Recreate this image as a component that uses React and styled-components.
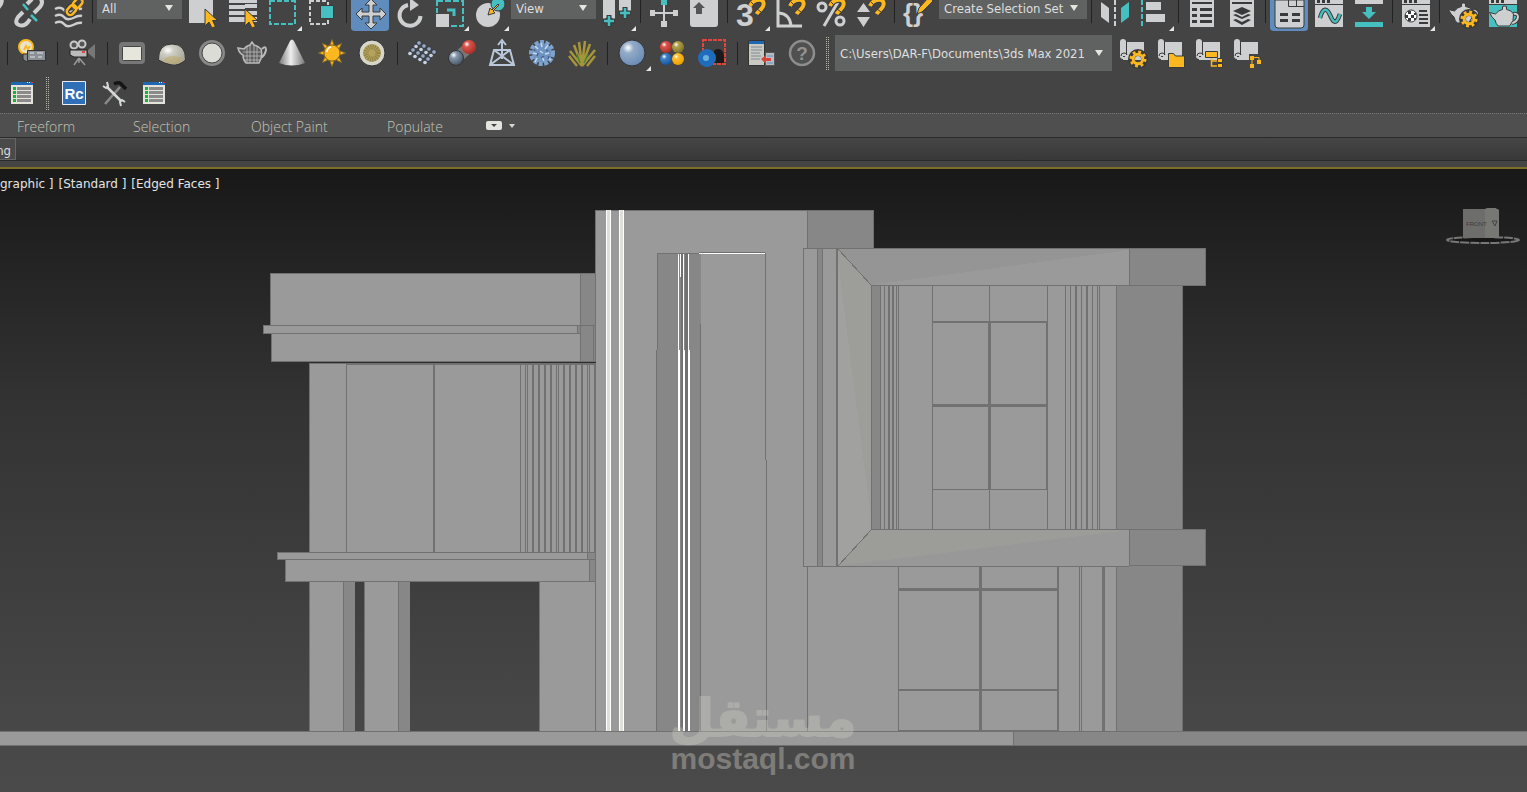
import styled, { createGlobalStyle } from "styled-components";

const LIGHT = "#cdcfd0";
const TEAL = "#45bfc0";
const GOLD = "#fcb81e";
const DARK = "#3a3a3a";
const FACE = "#9a9a9a";
const SIDE = "#878787";
const EDGE = "#717171";

const GlobalStyle = createGlobalStyle`
  * {
    box-sizing: border-box;
  }
  body {
    margin: 0;
    background: #444;
    color: #dfdfdf;
    font-family: "DejaVu Sans Condensed", "DejaVu Sans", sans-serif;
    font-size: 13px;
  }
  button, select {
    font: inherit;
    color: inherit;
  }
`;

const Page = styled.div`
  display: flex;
  flex-direction: column;
  min-height: 100vh;
  overflow: hidden;
`;

const Toolbar = styled.div`
  display: flex;
  align-items: ${(props) => (props.$cut ? "flex-start" : "center")};
  height: ${(props) => (props.$cut ? 33 : 40)}px;
  padding-left: ${(props) => (props.$cut ? 0 : 2)}px;
  background: #444;
`;

const IconButton = styled.button`
  display: flex;
  flex: none;
  justify-content: center;
  align-items: flex-start;
  width: ${(props) => props.$width || 40}px;
  height: ${(props) => props.$height || 40}px;
  padding: 0;
  border: solid transparent;
  border-width: 0 1px 2px;
  border-radius: 0 0 5px 5px;
  background: ${(props) => (props.$active ? "#5f8bbd" : "transparent")};
  background-clip: padding-box;

  svg {
    flex: none;
    display: block;
  }
`;

const Separator = styled.span`
  flex: none;
  width: ${(props) => (props.$wide ? 10 : 7)}px;
  height: 23px;
  background: linear-gradient(#222, #222) center / 1px 100% no-repeat;
`;

const Grip = styled.span`
  flex: none;
  width: 3px;
  height: 33px;
  margin: 0 5px 0 4px;
  border: dotted #b5b5a8;
  border-width: 0 1px;
`;

const Picker = styled.label`
  display: grid;
  flex: none;
  width: ${(props) => props.$width}px;
  height: ${(props) => props.$height}px;
  margin: 0 1px;
  background: #5f6261;

  select,
  svg {
    grid-area: 1 / 1;
  }
  select {
    appearance: none;
    width: 100%;
    height: 100%;
    padding: ${(props) => (props.$height < 30 ? "0 20px 3px 5px" : "0 16px 0 5px")};
    border: 0;
    background: none;
    outline: none;
  }
  svg {
    place-self: ${(props) => (props.$height < 30 ? "start" : "center")} end;
    margin: ${(props) => (props.$height < 30 ? "5px 9px 0 0" : "0 9px 0 0")};
    pointer-events: none;
  }
`;

const Ribbon = styled.nav`
  display: grid;
  grid-template-columns: 116px 118px 136px 98px 32px;
  align-items: center;
  height: 25px;
  padding-left: 17px;
  border-top: 1px dotted #777;
  border-bottom: 1px solid #2b2b2b;
  background: #4f4f4f;
`;

const Tab = styled.button`
  padding: 2px 0 0;
  border: 0;
  background: none;
  color: #c4c4b6;
  font-family: "Open Sans", "Noto Sans", sans-serif;
  font-size: 14px;
  font-weight: 300;
  line-height: 20px;
  text-align: left;
`;

const RibbonToggle = styled.button`
  display: flex;
  padding: 0;
  border: 0;
  background: none;
`;

const PanelBar = styled.div`
  display: flex;
  height: 23px;
  border-bottom: 1px solid #2b2b2b;
  background: linear-gradient(#464646, #383838);
`;

const PanelButton = styled.button`
  display: flex;
  justify-content: flex-end;
  align-items: center;
  width: 16px;
  height: 22px;
  padding: 2px 4px 0 0;
  overflow: hidden;
  border: 1px solid #666;
  border-left: 0;
  background: #4a4a4a;
`;

const Viewport = styled.main`
  position: relative;
  flex: 1;
  display: flex;
  margin-top: 6px;
  border-top: 2px solid #7f6d25;
  background: linear-gradient(#181818, #202020 10%, #333 38%, #3e3e3e 66%, #474747 88%, #4a4a4a);
`;

const ViewLabels = styled.div`
  position: absolute;
  top: 6px;
  left: 0;
  display: flex;
  gap: 5px;

  button {
    padding: 0;
    border: 0;
    background: none;
    color: #e4e4e4;
    font-family: "DejaVu Sans", sans-serif;
    font-size: 12px;
    line-height: 18px;
  }
`;

const Scene = styled.svg`
  display: block;
  width: 100%;
  min-height: 623px;
  flex: 1;
`;

const cursor = (
  <path d="M22 9v17l4-4 3 6 3.500-1.500-3-6h5z" fill={GOLD} stroke={DARK} />
);
const flyout = <path d="M39 26v5h-5z" fill="#e6e6e6" />;
const magnet = (
  <g fill="none">
    <path d="M19 6C22-1 34-3 32.500 5C32 9 28 10 25.500 14" stroke={DARK} strokeWidth="6" />
    <path d="M19 6C22-1 34-3 32.500 5C32 9 28 10 25.500 14" stroke={GOLD} strokeWidth="4" />
    <path d="M20 2l3 3M26 9l4 3" stroke={DARK} />
  </g>
);
const gear = (
  <g>
    <circle r="6.500" fill="none" stroke={DARK} strokeWidth="7" />
    <circle r="7" fill="none" stroke={GOLD} strokeWidth="3" strokeDasharray="2.750 2.750" />
    <circle r="4.800" fill="none" stroke={GOLD} strokeWidth="3" />
  </g>
);
const teapot = (
  <g>
    <path d="M29 11q5-1 5 3q-1 5-6 6" fill="none" stroke={DARK} strokeWidth="4" />
    <path d="M29 11q5-1 5 3q-1 5-6 6" fill="none" stroke={LIGHT} strokeWidth="2" />
    <path
      d="M5.500 9.500l6 1.500q3-4 7-4.500v-1.500q-1-2 2-2t2 2v1.500q5 .500 7 4.500q1 7-4 12H14q-2-2-3-6q-3-2-5.500-7.500z"
      fill={LIGHT}
      stroke={DARK}
    />
  </g>
);
const windowTop = (
  <g>
    <path d="M6 0h28v27H6z" fill={LIGHT} />
    <path d="M6 4h28v1H6zM8 0h3v3H8zM13 0h3v3h-3zM18 0h3v3h-3z" fill={DARK} />
  </g>
);
const scroll = (
  <g>
    <path d="M13 9h18v18H10v-3h3z" fill={LIGHT} />
    <rect x="7" y="6" width="6" height="20" rx="3" fill={LIGHT} />
    <path d="M13.500 9v13M8 23q0-3 3-3t3 2" fill="none" stroke={DARK} />
    <path d="M10 23h2v1h-2z" fill={DARK} />
  </g>
);
const listIcon = (
  <g shapeRendering="crispEdges">
    <path d="M9 9h22v22H9z" fill="#e3e3dc" />
    <path d="M9 9h22v3H9z" fill="#1f66b3" />
    <path d="M25 9h1v1h-1zM27 9h1v1h-1z" fill="#fff" />
    <path d="M29 9h2v1h-2z" fill="#e33" />
    <path d="M11 14h3v3h-3zM11 18h3v3h-3zM11 22h3v3h-3zM11 26h3v3h-3z" fill="#15b33c" />
    <path d="M15 14h14v3H15zM15 18h14v3H15zM15 22h14v3H15zM15 26h14v3H15z" fill="#8a8a8a" />
  </g>
);

const icons = {
  linkTip: <path d="M-4-4h3q6 5-1 12" fill="none" stroke={LIGHT} strokeWidth="4" />,
  unlink: (
    <g fill="none" strokeWidth="4">
      <path d="M14 12L9 17q-4 6 1 8t9-3l2-3M18 4l5-5M25 13l6-6q4-5 0-9" stroke={LIGHT} />
      <path d="M14 4l5 6M22 15l6 6" stroke={TEAL} strokeWidth="2.500" />
    </g>
  ),
  bind: (
    <g fill="none" strokeWidth="2.500">
      {[9, 16, 23].map((y) => (
        <path key={y} d={`M6 ${y}q6-3 9 1t9 1t9-2`} stroke={LIGHT} />
      ))}
      <g transform="rotate(-48 26 7)">
        <rect x="16" y="3" width="11" height="7" rx="3.500" stroke={DARK} strokeWidth="5" />
        <rect x="16" y="3" width="11" height="7" rx="3.500" stroke={GOLD} />
        <rect x="25" y="3" width="11" height="7" rx="3.500" stroke={GOLD} />
      </g>
    </g>
  ),
  selectObject: (
    <>
      <path d="M6 0h24v23H6z" fill={LIGHT} />
      {cursor}
    </>
  ),
  selectName: (
    <>
      <path d="M6 0h28v3H6zM6 5h16v4H6zM22 4h12v4H22zM6 11h28v4H6zM6 17h28v5H6z" fill={LIGHT} />
      {cursor}
    </>
  ),
  region: (
    <>
      <path d="M7 0v24h25V0M7 1h25" fill="none" stroke={TEAL} strokeWidth="2" strokeDasharray="5 2" />
      {flyout}
    </>
  ),
  crossing: (
    <>
      <path d="M7 0v24h18V0M7 1h18" fill="none" stroke={LIGHT} strokeWidth="2" strokeDasharray="4 2" />
      <path d="M17.500 5.500h13v13h-13z" fill={TEAL} stroke={DARK} />
    </>
  ),
  move: (
    <path
      d="M21-1l6 6h-4v7h7V8l6 6-6 6v-4h-7v7h4l-6 6-6-6h4v-7h-7v4l-6-6 6-6v4h7V5h-4z"
      fill={LIGHT}
      stroke={DARK}
    />
  ),
  rotate: (
    <>
      <path d="M18 5A10.500 10.500 0 1 0 30.500 16" fill="none" stroke={LIGHT} strokeWidth="4" />
      <path d="M20-2l9 7-9 6z" fill={LIGHT} />
    </>
  ),
  scale: (
    <>
      <path d="M7 0v26h26V0M7 1h26" fill="none" stroke={TEAL} strokeWidth="2" strokeDasharray="6 2" />
      <path d="M5 13h15v15H5z" fill="#444" />
      <path d="M6 14h13v13H6z" fill={LIGHT} />
      <path d="M17 10h7v6" fill="none" stroke={TEAL} strokeWidth="3" />
      {flyout}
    </>
  ),
  place: (
    <>
      <circle cx="18" cy="15" r="12" fill={LIGHT} />
      <circle cx="28" cy="4" r="7" fill={TEAL} stroke={DARK} />
      <path d="M28 4l-6 6-2-2-2 7 7-2-2-2 6-6z" fill={GOLD} stroke={DARK} />
      {flyout}
    </>
  ),
  pivots: (
    <>
      <path d="M6 0h12v20l-6-4-6 4zM22 0h12v13l-6-4-6 4z" fill={LIGHT} />
      <path d="M12 15v12M6 21h12M28 7v12M22 13h12" stroke={DARK} strokeWidth="5" />
      <path d="M12 16v10M7 21h10M28 8v10M23 13h10" stroke={TEAL} strokeWidth="2.500" />
      {flyout}
    </>
  ),
  manipulate: (
    <>
      <path d="M6 10h5v6H6zM29 10h5v6h-5zM17 21h6v6h-6zM10 12h20v2H10zM19 5h2v17h-2z" fill={LIGHT} />
      <path d="M17 0h6v5h-6z" fill={TEAL} />
    </>
  ),
  keyboard: (
    <>
      <path d="M6 0h28v24q0 3-3 3H9q-3 0-3-3z" fill={LIGHT} />
      <path d="M15 2l6 6h-3v6h-6V8H9z" fill="#555" />
    </>
  ),
  snap: (
    <>
      <text x="5" y="26" fontFamily="Liberation Sans, sans-serif" fontWeight="700" fontSize="32" fill={LIGHT}>
        3
      </text>
      {magnet}
      {flyout}
    </>
  ),
  angle: (
    <>
      <path d="M7 0v26h24M8 13q11 1 12 13" fill="none" stroke={LIGHT} strokeWidth="3" />
      {magnet}
    </>
  ),
  percent: (
    <>
      <g fill="none" stroke={LIGHT} strokeWidth="3">
        <circle cx="11" cy="7" r="4" />
        <circle cx="29" cy="21" r="4" />
        <path d="M27 2L13 26" />
      </g>
      {magnet}
    </>
  ),
  spinner: (
    <>
      <path d="M6 12l6.500-9L19 12zM6 17l6.500 10L19 17z" fill={LIGHT} />
      {magnet}
    </>
  ),
  braces: (
    <>
      <text x="5" y="22" fontFamily="Liberation Sans, sans-serif" fontWeight="700" fontSize="26" fill={LIGHT}>
        {"{}"}
      </text>
      <path d="M19 14l2-6L31-3l4 4-11 11z" fill={GOLD} stroke={DARK} />
    </>
  ),
  mirror: (
    <>
      <path d="M6 2l8 6v15l-8-6z" fill={LIGHT} />
      <path d="M20 0v26" stroke={LIGHT} strokeWidth="2" strokeDasharray="5 2" />
      <path d="M34 2l-8 6v15l8-6z" fill={TEAL} />
    </>
  ),
  align: (
    <>
      <path d="M7 0v26" stroke={TEAL} strokeWidth="2" strokeDasharray="5 2" />
      <path d="M11 2h15v8H11zM11 14h19v8H11z" fill={LIGHT} />
      {flyout}
    </>
  ),
  sceneExplorer: (
    <>
      <path d="M8 0h24v27H8z" fill={LIGHT} />
      <path
        d="M10 2h20v2H10zM10 8h5v3h-5zM18 8h12v3H18zM10 14h5v3h-5zM18 14h12v3H18zM10 20h5v3h-5zM18 20h12v3H18z"
        fill={DARK}
      />
    </>
  ),
  layers: (
    <>
      <path d="M8 0h24v27H8z" fill={LIGHT} />
      <path
        d="M10 2h20v2H10zM20 7l9 4-9 4-9-4zM11 15l3-1 6 3 6-3 3 1-9 4zM11 20l3-1 6 3 6-3 3 1-9 5z"
        fill={DARK}
      />
    </>
  ),
  ribbon: (
    <>
      <path d="M6 0v25q0 3 3 3h23q3 0 3-3V0z" fill={LIGHT} stroke={DARK} />
      <path d="M19.500 0v6.500H35M27.500 0v6" fill="none" stroke={DARK} />
      <path d="M11 13h8v3h-8zM23 13h8v3h-8zM11 19h8v3h-8zM23 19h8v3h-8z" fill={DARK} />
    </>
  ),
  curve: (
    <>
      {windowTop}
      <path d="M11 18C14 7 18 8 21 15S27 26 31 14" fill="none" stroke={DARK} strokeWidth="4.500" />
      <path d="M11 18C14 7 18 8 21 15S27 26 31 14" fill="none" stroke={TEAL} strokeWidth="2.500" />
    </>
  ),
  schematic: (
    <>
      <path d="M6 0h28v4H6z" fill={LIGHT} />
      <path d="M17 7h6v5h4l-7 7-7-7h4zM6 22h28v5H6z" fill={TEAL} />
    </>
  ),
  material: (
    <>
      {windowTop}
      <circle cx="15" cy="16" r="6" fill="#fff" stroke={DARK} />
      <path d="M12 11h3v3h-3zM18 13h2v2h-2zM9 15h3v3H9zM15 15h3v3h-3zM12 18h3v3h-3zM18 18h2v2h-2z" fill={DARK} />
      <path d="M23 10h8v2h-8zM23 14h9v2h-9zM23 18h9v2h-9zM23 22h9v2h-9z" fill={DARK} />
      {flyout}
    </>
  ),
  renderSetup: (
    <>
      {teapot}
      <g transform="translate(26 19)">{gear}</g>
    </>
  ),
  renderFrame: (
    <>
      {windowTop}
      <path d="M6 5h28v22H6z" fill={TEAL} />
      <g transform="translate(1 3)">{teapot}</g>
    </>
  ),

  lightLister: (
    <>
      <circle cx="14" cy="14" r="7" fill="#e8e4cf" stroke={GOLD} strokeWidth="2" />
      <path d="M12 17l2-4 2 3 2-3" fill="none" stroke={GOLD} strokeWidth="2" />
      <path d="M11 21h7v5q-3 5-7 0z" fill="#888" stroke="#333" />
      <path d="M15.500 17.500h18v10h-18z" fill="#8b8f96" stroke="#333" />
      <path d="M18 20h4M25 20h6M18 24h5M26 24h4" stroke="#dfe3ea" />
    </>
  ),
  camera: (
    <>
      <path d="M26 17l7-6v15l-7-6z" fill="#777" />
      <g fill="#555" stroke="#c9c9c9" strokeWidth="2">
        <circle cx="12" cy="12" r="3.500" />
        <circle cx="20" cy="11" r="3.500" />
      </g>
      <path d="M8 17h17v7H12l-4-2z" fill="#bbb" stroke="#222" />
      <path d="M17 25l-5 7M17 25l6 7M17 25v5" stroke="#999" strokeWidth="1.500" />
      <path d="M20 18h3v2h-3z" fill="#d44" />
    </>
  ),
  box: (
    <>
      <rect x="7" y="9" width="26" height="22" rx="4" fill="#777" />
      <rect x="10.500" y="13.500" width="19" height="14" rx="1" fill="#e6e6dd" stroke="#444" />
    </>
  ),
  dome: (
    <>
      <path d="M6.500 27Q6 11 20 11T33.500 27Q27 33 20 32T6.500 27z" fill="url(#stone)" stroke="#333" />
      <ellipse cx="21" cy="27" rx="9" ry="4" fill="#bfa65a" opacity=".45" />
    </>
  ),
  sphere: (
    <>
      <circle cx="20" cy="20" r="13" fill="#888" />
      <circle cx="20" cy="20" r="10" fill="#dcdcd6" stroke="#444" />
    </>
  ),
  wireTeapot: (
    <>
      <path d="M30 16q4-4 4 1q-1 6-6 8" fill="none" stroke="#bbb" strokeWidth="2" />
      <path
        d="M6 15l6 1q2-3 6-4l2-3l2 3q4 1 7 4q2 7-2 14H14q-3-3-3-8q-4-2-5-7z"
        fill="#5c5c5c"
        stroke="#bbb"
        strokeWidth="1.500"
      />
      <path d="M15 14v16M18 12v18M22 12v18M25 14v16M11 19h18M11 23h18M12 27h16" stroke="#bbb" strokeWidth=".800" />
    </>
  ),
  cone: <path d="M18 8q2-3 4 0l11 22q-13 5-26 0z" fill="url(#cone)" />,
  sun: (
    <g>
      {[0, 45, 90, 135, 180, 225, 270, 315].map((turn) => (
        <path
          key={turn}
          d="M18 12l2-5.500L22 12z"
          fill={GOLD}
          stroke="#8a6a22"
          strokeWidth=".700"
          transform={`rotate(${turn} 20 20)`}
        />
      ))}
      <circle cx="20" cy="20" r="8" fill={GOLD} stroke="#8a6a22" />
      <path d="M15 19q0-4 4-5" fill="none" stroke="#fff" strokeWidth="1.500" />
    </g>
  ),
  disc: (
    <>
      <circle cx="20" cy="20" r="13" fill="#d7d6cb" stroke="#333" />
      <circle cx="20" cy="20" r="9" fill="#b5a35c" />
      <circle cx="20" cy="20" r="6" fill="none" stroke="#8f8148" strokeWidth="5" strokeDasharray="1 1" />
    </>
  ),
  beads: (
    <g>
      {[0, 1, 2, 3].map((row) =>
        [0, 1, 2, 3].map((col) => (
          <circle
            key={`${row}${col}`}
            cx={17 + col * 5 - row * 3}
            cy={10 + col * 3 + row * 3.5}
            r="2.300"
            fill={row % 2 ? "#c7d2e0" : "#98abc6"}
            stroke="#2e333b"
            strokeWidth=".800"
          />
        ))
      )}
    </g>
  ),
  blend: (
    <>
      <path d="M14 18l10-8 6 9-10 9z" fill="#777" />
      <circle cx="27" cy="14" r="7" fill="url(#red)" />
      <circle cx="14" cy="25" r="7.500" fill="url(#steel)" stroke="#333" />
    </>
  ),
  pyramid: (
    <g fill="none" stroke="#b8c7da" strokeWidth="2">
      <path d="M12 17h16l4 15H8zM8 32l20-15M12 17l20 15M20 26V9M16 12l4-5 4 5" />
    </g>
  ),
  fur: (
    <>
      <circle cx="20" cy="20" r="10" fill="#6f94c2" />
      <circle cx="20" cy="20" r="11" fill="none" stroke="#7fa3cf" strokeWidth="4" strokeDasharray="4 1.500" />
      <path
        d="M13 13l3 3M19 10l1 4M26 12l-3 4M11 20l4 1M18 18l3 2M27 20l-4 1M15 25l-2 4M20 24l2 4M26 25l3 2"
        stroke="#c6daf0"
        strokeWidth="1.500"
      />
      <path d="M16 20l-1 3M24 17l2 1M22 23l-3 2M12 16l1 2M27 23l-1 3" stroke="#46648c" strokeWidth="1.500" />
    </>
  ),
  grass: (
    <>
      <path
        d="M20 33L8 18M20 33L12 12M20 33L17 9M20 33L23 8M20 33L28 11M20 33L33 17M15 33L7 23M25 33L33 23"
        stroke="#a8953a"
        strokeWidth="2.500"
      />
      <path d="M18 30l-3-9M22 30l4-9" stroke="#3d8a34" strokeWidth="1.500" />
    </>
  ),
  ball: (
    <>
      <circle cx="20" cy="20" r="13" fill="url(#blue)" stroke="#333" />
      <path d="M39 33v5h-5z" fill="#e6e6e6" />
    </>
  ),
  fourBalls: (
    <>
      <circle cx="14" cy="14" r="6" fill="url(#red)" />
      <circle cx="26" cy="14" r="6" fill="url(#olive)" />
      <circle cx="14" cy="26" r="6" fill="url(#deep)" />
      <circle cx="26" cy="26" r="6" fill="url(#amber)" />
    </>
  ),
  ballRegion: (
    <>
      <path d="M11 7h22v24H11z" fill="none" stroke="#e0463c" strokeWidth="2" strokeDasharray="4 1" />
      <path d="M21 23q0-7 5-7t6 7v7H21z" fill="#1a1a1a" />
      <circle cx="15" cy="25" r="9" fill="#1f6cbc" />
      <circle cx="14" cy="25" r="3" fill="#69b2dc" />
    </>
  ),
  transfer: (
    <>
      <path d="M6.500 7.500h16v25h-16z" fill="#c9c9c3" stroke="#333" />
      <path d="M7 8h15v3H7z" fill="#1f66b3" />
      <path d="M9 14h11M9 17h11M9 20h9M9 23h10M9 26h9" stroke="#7f8b96" />
      <path d="M23.500 19.500h9v13h-9z" fill="#b9bdc0" stroke="#555" />
      <path d="M25 23h6M25 30h6" stroke="#5c93c9" />
      <path d="M19 26l5-4v3h5v3h-5v3z" fill="#d5453b" />
    </>
  ),
  help: (
    <>
      <circle cx="20" cy="20" r="12" fill="#505050" stroke="#8d8d8d" strokeWidth="2.500" />
      <text x="20" y="27" textAnchor="middle" fontFamily="Liberation Sans, sans-serif" fontWeight="700" fontSize="19" fill="#929292">
        ?
      </text>
    </>
  ),
  scriptGear: (
    <>
      {scroll}
      <g transform="translate(25 26)">{gear}</g>
    </>
  ),
  scriptFolder: (
    <>
      {scroll}
      <path d="M17.500 20.500h5l2 2.500h9v11.500h-16z" fill={GOLD} stroke={DARK} />
    </>
  ),
  scriptTree: (
    <>
      {scroll}
      <path d="M16.500 18.500h12v6h-12z" fill={GOLD} stroke={DARK} />
      <path d="M22.500 25v8H29M22.500 28H29" fill="none" stroke={GOLD} strokeWidth="1.500" />
      <path d="M28.500 25.500h5v4h-5zM28.500 30.500h5v4h-5z" fill={GOLD} stroke={DARK} />
    </>
  ),
  scriptNodes: (
    <>
      {scroll}
      <path d="M22 21h13v9h-7v5h-6z" fill="#444" />
      <path d="M23 23h4v4h-4zM30 27h4v4h-4zM23 31h4v4h-4z" fill={GOLD} />
      <path d="M25 26v6M27 24.500h5V28" fill="none" stroke={GOLD} />
    </>
  ),

  list: listIcon,
  recap: (
    <>
      <path d="M8.500 8.500h23v23h-23z" fill="#2f6fb7" stroke="#e8eef4" />
      <text x="20" y="26" textAnchor="middle" fontFamily="Liberation Sans, sans-serif" fontWeight="700" fontSize="15" fill="#fff">
        Rc
      </text>
    </>
  ),
  tools: (
    <g fill="none">
      <path d="M11 31l15-17" stroke="#8b8b8b" strokeWidth="2.500" />
      <path d="M20 11q6-3 8 1l4 4" stroke="#151515" strokeWidth="3.500" />
      <path d="M13 14l14 14" stroke="#d7d9d8" strokeWidth="2.500" />
      <path d="M9 13l3 2 2-2-1-4M31 29l-3-2-2 2 1 4" stroke="#d7d9d8" strokeWidth="2" />
    </g>
  ),
};

function Tool({ icon, label, active, cut, width = 40 }) {
  const height = cut ? 33 : 40;
  return (
    <IconButton type="button" aria-label={label} $active={active} $width={width} $height={height}>
      <svg width={width} height={height} viewBox={`0 0 ${width} ${height}`} aria-hidden="true">
        {icons[icon]}
      </svg>
    </IconButton>
  );
}

function Tools({ items, ...rest }) {
  return items.map(([icon, label, active]) => (
    <Tool key={label} icon={icon} label={label} active={active} {...rest} />
  ));
}

function Dropdown({ label, value, width, height = 19 }) {
  return (
    <Picker $width={width} $height={height}>
      <select aria-label={label} defaultValue={value}>
        <option>{value}</option>
      </select>
      <svg width="8" height="6" aria-hidden="true">
        <path d="M0 0h8L4 6z" fill="#e6e6e0" />
      </svg>
    </Picker>
  );
}

function Gradients() {
  const ball = (id, light, dark) => (
    <radialGradient id={id} cx=".35" cy=".3" r=".7">
      <stop offset="0" stopColor="#fff" />
      <stop offset=".3" stopColor={light} />
      <stop offset="1" stopColor={dark} />
    </radialGradient>
  );
  return (
    <defs>
      {ball("red", "#dc544a", "#a8322b")}
      {ball("blue", "#93abc8", "#6d8cb5")}
      {ball("deep", "#3f82c6", "#1757a0")}
      {ball("olive", "#b2a24a", "#82752c")}
      {ball("amber", "#fcbd2a", "#f0a000")}
      {ball("steel", "#8598ad", "#4a5662")}
      {ball("stone", "#cfcec6", "#a9a798")}
      <linearGradient id="cone">
        <stop offset="0" stopColor="#777" />
        <stop offset=".45" stopColor="#eee" />
        <stop offset="1" stopColor="#777" />
      </linearGradient>
    </defs>
  );
}

// Outlined wall, x2 and y2 are the last pixels of the outline
function Wall({ x, y, x2, y2, side }) {
  return (
    <rect
      x={x + 0.5}
      y={y + 0.5}
      width={x2 - x}
      height={y2 - y}
      fill={side ? SIDE : FACE}
      stroke={EDGE}
    />
  );
}

// Vertical edges as [x, thickness] pairs between two heights
function Edges({ at, y, y2, color = EDGE }) {
  return at.map(([x, w]) => (
    <rect key={x} x={x} y={y} width={w} height={y2 - y} fill={color} />
  ));
}

function Sills({ at, x, x2 }) {
  return at.map(([y, h]) => (
    <rect key={y} x={x} y={y} width={x2 - x} height={h} fill={EDGE} />
  ));
}

function LeftWing() {
  return (
    <g>
      <Wall x={270} y={273} x2={580} y2={325} />
      <Wall x={580} y={273} x2={595} y2={325} side />
      <Wall x={271} y={333} x2={580} y2={361} />
      <Wall x={263} y={325} x2={577} y2={333} />
      <Wall x={577} y={325} x2={580} y2={333} side />
      <Wall x={580} y={325} x2={595} y2={361} side />
      <Edges at={[[593, 1]]} y={325} y2={361} />
      <rect x="309" y="362" width="286" height="1" fill="#2b2b2b" />
      <Wall x={309} y={363} x2={595} y2={552} />
      <Sills at={[[363, 2]]} x={346} x2={596} />
      <Edges
        at={[
          [346, 1], [433, 2], [520, 1], [525, 1], [527, 1], [532, 2], [538, 2],
          [544, 2], [550, 2], [556, 1], [558, 1], [563, 2], [569, 2], [575, 2],
          [581, 2], [587, 1], [589, 1], [594, 2],
        ]}
        y={363}
        y2={552}
      />
      <Wall x={309} y={581} x2={343} y2={731} />
      <rect x="344" y="581" width="11" height="150" fill={SIDE} />
      <Wall x={364} y={581} x2={398} y2={731} />
      <rect x="399" y="581" width="11" height="150" fill={SIDE} />
      <Wall x={539} y={581} x2={595} y2={731} />
      <Wall x={277} y={552} x2={587} y2={559} />
      <Wall x={587} y={552} x2={595} y2={559} side />
      <Wall x={285} y={559} x2={589} y2={581} />
      <Wall x={589} y={559} x2={595} y2={581} side />
    </g>
  );
}

function Tower() {
  return (
    <g>
      <rect x="596" y="210" width="212" height="521" fill={FACE} />
      <Edges at={[[595, 1]]} y={210} y2={273} />
      <Sills at={[[210, 1]]} x={595} x2={807} />
      <Wall x={807} y={210} x2={873} y2={248} side />
      <Edges at={[[606, 5], [619, 5]]} y={210} y2={731} color="#fff" />
      <Edges at={[[607, 3], [620, 3]]} y={210} y2={731} color="#dedfd8" />
      <rect x="657" y="253" width="44" height="478" fill={SIDE} />
      <Sills at={[[253, 1]]} x={657} x2={766} />
      <Edges at={[[657, 1]]} y={253} y2={350} />
      <Edges at={[[656, 1]]} y={350} y2={731} />
      <Edges at={[[700, 1]]} y={324} y2={731} />
      <Edges at={[[765, 1]]} y={253} y2={460} />
      <Edges at={[[766, 1]]} y={460} y2={731} />
      <Edges at={[[681, 2], [685, 3]]} y={254} y2={731} />
      <Edges at={[[678, 1], [683, 1], [688, 1]]} y={254} y2={731} color="#fff" />
      <Edges at={[[679, 1], [684, 1], [689, 1]]} y={350} y2={731} color="#fff" />
      <Edges at={[[680, 1]]} y={254} y2={277} color="#fff" />
      <rect x="699" y="253" width="66" height="1" fill="#fff" />
      <rect x="699" y="252" width="66" height="1" fill={EDGE} />
    </g>
  );
}

function RightWing() {
  return (
    <g>
      <rect x="807" y="566" width="310" height="165" fill={FACE} />
      <rect x="1117" y="285" width="66" height="446" fill={SIDE} />
      <Edges at={[[1182, 1]]} y={285} y2={731} />
      <Edges
        at={[[807, 1], [898, 1], [979, 3], [1057, 2], [1079, 1], [1081, 1], [1102, 3], [1116, 1]]}
        y={566}
        y2={731}
      />
      <Sills at={[[588, 3], [689, 2], [730, 1]]} x={898} x2={1059} />

      <rect x="872" y="285" width="245" height="245" fill={FACE} />
      <rect x="872" y="285" width="8" height="245" fill={SIDE} />
      <Edges
        at={[
          [871, 1], [880, 1], [884, 1], [888, 2], [892, 2], [896, 1], [898, 1],
          [932, 1], [989, 1], [1047, 1], [1065, 1], [1070, 1], [1075, 2],
          [1081, 1], [1086, 2], [1092, 1], [1097, 1], [1099, 1], [1116, 1],
        ]}
        y={285}
        y2={530}
      />
      <Sills at={[[321, 2], [404, 3], [489, 1]]} x={932} x2={1048} />
      <Edges at={[[988, 3], [1046, 2]]} y={321} y2={490} />

      <Wall x={803} y={248} x2={837} y2={566} />
      <Wall x={817} y={248} x2={822} y2={566} side />
      <Edges at={[[836, 2]]} y={248} y2={566} />
      <path d="M838 249l33 36v244l-33 37z" fill="#9d9d99" />
      <path d="M838 262l33 256v11l-33 37z" fill="#a1a1a0" />
      <path d="M838 249h291v36H871z" fill="#959595" />
      <path d="M871 285l258-35v35z" fill={FACE} />
      <path d="M871 529h258v37H838z" fill="#9c9c98" />
      <path d="M838 566l291-36v36z" fill="#989898" />
      <path
        d="M803 248.500h326M838 249l33.500 36.500H1129M838 566l33.500-36.500H1129M838 566.500h291"
        fill="none"
        stroke={EDGE}
      />
      <Wall x={1129} y={248} x2={1205} y2={285} side />
      <Wall x={1129} y={529} x2={1205} y2={565} side />
    </g>
  );
}

function ViewCube() {
  return (
    <g>
      <ellipse cx="1483" cy="240" rx="36" ry="3" fill="#171717" stroke="#777" strokeWidth="2" strokeDasharray="9 1" />
      <path d="M1463 209h22l3-1h7l4 2v28h-36z" fill="#6d6d6b" />
      <path d="M1485 209l3-1h7l4 2v28h-14z" fill="#777774" />
      <text x="1466" y="226" fontFamily="Liberation Sans, sans-serif" fontSize="6" fill="#3c3c3c">
        FRONT
      </text>
      <path d="M1492 221h5l-2 5z" fill="none" stroke="#444" />
    </g>
  );
}

function Watermark() {
  return (
    <g fill="#d8d6cc" textAnchor="middle">
      <text
        x="763"
        y="736"
        opacity=".3"
        direction="rtl"
        fontFamily="DejaVu Sans, sans-serif"
        fontWeight="700"
        fontSize="51"
        stroke="#d8d6cc"
        strokeWidth="2"
        strokeLinejoin="round"
      >
        مستقل
      </text>
      <text
        x="763"
        y="769"
        opacity=".37"
        fontFamily="Liberation Sans, sans-serif"
        fontWeight="700"
        fontSize="30"
      >
        mostaql.com
      </text>
    </g>
  );
}

export default function App() {
  return (
    <Page>
      <GlobalStyle />
      <Toolbar $cut role="toolbar" aria-label="Main toolbar">
        <Tool cut width={9} icon="linkTip" label="Link" />
        <Tools cut items={[["unlink", "Unlink"], ["bind", "Bind to space warp"]]} />
        <Separator />
        <Dropdown label="Selection filter" value="All" width={85} />
        <Tools
          cut
          items={[
            ["selectObject", "Select object"],
            ["selectName", "Select by name"],
            ["region", "Rectangular region"],
            ["crossing", "Window / crossing"],
          ]}
        />
        <Separator />
        <Tools
          cut
          items={[
            ["move", "Move", true],
            ["rotate", "Rotate"],
            ["scale", "Scale"],
            ["place", "Place"],
          ]}
        />
        <Dropdown label="Reference coordinates" value="View" width={85} />
        <Tools cut items={[["pivots", "Pivot center"]]} />
        <Separator />
        <Tools cut items={[["manipulate", "Manipulate"], ["keyboard", "Keyboard override"]]} />
        <Separator />
        <Tools
          cut
          items={[
            ["snap", "Snaps"],
            ["angle", "Angle snap"],
            ["percent", "Percent snap"],
            ["spinner", "Spinner snap"],
          ]}
        />
        <Separator />
        <Tools cut items={[["braces", "Edit selection sets"]]} />
        <Dropdown label="Named selection sets" value="Create Selection Set" width={148} />
        <Separator />
        <Tools cut items={[["mirror", "Mirror"], ["align", "Align"]]} />
        <Separator />
        <Tools cut items={[["sceneExplorer", "Scene explorer"], ["layers", "Layer explorer"]]} />
        <Separator />
        <Tools
          cut
          items={[
            ["ribbon", "Ribbon", true],
            ["curve", "Curve editor"],
            ["schematic", "Schematic view"],
          ]}
        />
        <Separator />
        <Tools cut items={[["material", "Material editor"]]} />
        <Separator />
        <Tools cut items={[["renderSetup", "Render setup"], ["renderFrame", "Rendered frame"]]} />
      </Toolbar>

      <Toolbar role="toolbar" aria-label="Objects">
        <Separator $wide />
        <Tools items={[["lightLister", "Light lister"]]} />
        <Separator $wide />
        <Tools items={[["camera", "Camera"]]} />
        <Separator $wide />
        <Tools
          items={[
            ["box", "Plane light"],
            ["dome", "Dome light"],
            ["sphere", "Sphere light"],
            ["wireTeapot", "Mesh light"],
            ["cone", "Spot light"],
            ["sun", "Sun"],
            ["disc", "Disc light"],
          ]}
        />
        <Separator $wide />
        <Tools
          items={[
            ["beads", "Instancer"],
            ["blend", "Metaballs"],
            ["pyramid", "Proxy"],
            ["fur", "Fur"],
            ["grass", "Grass"],
          ]}
        />
        <Separator $wide />
        <Tools
          items={[
            ["ball", "Material"],
            ["fourBalls", "Material library"],
            ["ballRegion", "Region render"],
          ]}
        />
        <Separator $wide />
        <Tools items={[["transfer", "Convert"], ["help", "Help"]]} />
        <Grip />
        <Dropdown
          label="Project folder"
          value="C:\Users\DAR-F\Documents\3ds Max 2021"
          width={277}
          height={36}
        />
        <Tools
          width={38}
          items={[
            ["scriptGear", "Project settings"],
            ["scriptFolder", "Open project"],
            ["scriptTree", "Project structure"],
            ["scriptNodes", "Project nodes"],
          ]}
        />
      </Toolbar>

      <Toolbar role="toolbar" aria-label="Plugins">
        <Tool icon="list" label="List" />
        <Grip />
        <Tools items={[["recap", "ReCap"], ["tools", "Tools"], ["list", "Options list"]]} />
      </Toolbar>

      <Ribbon>
        <Tab type="button">Freeform</Tab>
        <Tab type="button">Selection</Tab>
        <Tab type="button">Object Paint</Tab>
        <Tab type="button">Populate</Tab>
        <RibbonToggle type="button" aria-label="Minimize ribbon">
          <svg width="32" height="12" aria-hidden="true">
            <rect x="1" y="1" width="16" height="9" rx="2" fill="#e4e4de" />
            <path d="M6 4h6l-3 3z" fill="#444" />
            <path d="M24 4h6l-3 4z" fill="#d8d8d2" />
          </svg>
        </RibbonToggle>
      </Ribbon>
      <PanelBar>
        <PanelButton type="button">ng</PanelButton>
      </PanelBar>

      <Viewport>
        <Scene viewBox="0 169 1527 623" preserveAspectRatio="xMidYMid slice">
          <Gradients />
          <g shapeRendering="crispEdges">
            <Tower />
            <LeftWing />
            <RightWing />
            <Wall x={-2} y={731} x2={1013} y2={745} />
            <Wall x={1013} y={731} x2={1530} y2={745} side />
          </g>
          <ViewCube />
          <Watermark />
        </Scene>
        <ViewLabels>
          <button type="button">graphic ]</button>
          <button type="button">[Standard ]</button>
          <button type="button">[Edged Faces ]</button>
        </ViewLabels>
      </Viewport>
    </Page>
  );
}
